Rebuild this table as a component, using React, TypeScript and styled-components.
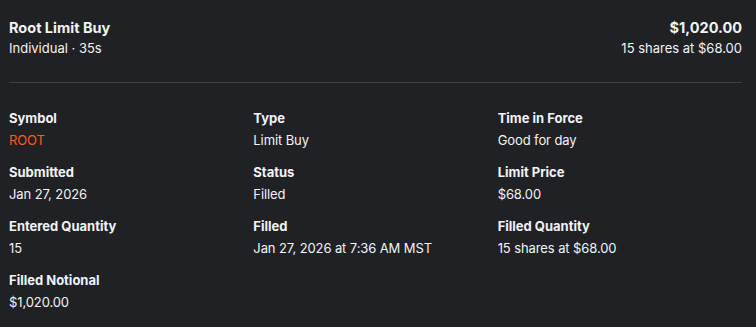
import React from 'react';
import styled, { createGlobalStyle } from 'styled-components';

const GlobalStyle = createGlobalStyle`
    html, body {
        margin: 0;
        background: #1f2125;
    }
    body {
        font-family: Inter, "Noto Sans", sans-serif;
        color: #f2f3f5;
        -webkit-font-smoothing: antialiased;
    }
`;

const Panel = styled.div`
    padding: 18px 14px 0 9px;
    width: 756px;
    height: 327px;
    box-sizing: border-box;
    background: #1f2125;
`;

const Header = styled.div`
    display: flex;
    justify-content: space-between;
    align-items: flex-start;
    padding-bottom: 25px;
    border-bottom: 1px solid #3d4045;
`;

const Side = styled.div<{ $right?: boolean }>`
    display: flex;
    flex-direction: column;
    gap: 1px;
    align-items: ${p => (p.$right ? 'flex-end' : 'flex-start')};
`;

const Title = styled.div`
    font-size: 14.5px;
    font-weight: 700;
    line-height: 20px;
`;

const Sub = styled.div`
    font-size: 13px;
    line-height: 18px;
`;

const Grid = styled.div`
    display: grid;
    grid-template-columns: repeat(3, 1fr);
    row-gap: 14px;
    padding-top: 26px;
`;

const Field = styled.div`
    display: flex;
    flex-direction: column;
    gap: 4px;
`;

const Label = styled.div`
    font-size: 13px;
    font-weight: 700;
    line-height: 18px;
`;

const Value = styled.div<{ $accent?: boolean }>`
    font-size: 13px;
    line-height: 18px;
    letter-spacing: -0.1px;
    color: ${p => (p.$accent ? '#ff5a1f' : '#f2f3f5')};
`;

const fields = [
    { label: 'Symbol', value: 'ROOT', accent: true },
    { label: 'Type', value: 'Limit Buy' },
    { label: 'Time in Force', value: 'Good for day' },
    { label: 'Submitted', value: 'Jan 27, 2026' },
    { label: 'Status', value: 'Filled' },
    { label: 'Limit Price', value: '$68.00' },
    { label: 'Entered Quantity', value: '15' },
    { label: 'Filled', value: 'Jan 27, 2026 at 7:36 AM MST' },
    { label: 'Filled Quantity', value: '15 shares at $68.00' },
    { label: 'Filled Notional', value: '$1,020.00' },
];

const App = () => {
    return (
        <>
            <GlobalStyle />
            <Panel>
                <Header>
                    <Side>
                        <Title>Root Limit Buy</Title>
                        <Sub>Individual · 35s</Sub>
                    </Side>
                    <Side $right>
                        <Title>$1,020.00</Title>
                        <Sub>15 shares at $68.00</Sub>
                    </Side>
                </Header>
                <Grid>
                    {fields.map(f => (
                        <Field key={f.label}>
                            <Label>{f.label}</Label>
                            <Value $accent={f.accent}>{f.value}</Value>
                        </Field>
                    ))}
                </Grid>
            </Panel>
        </>
    );
};

export default App;
